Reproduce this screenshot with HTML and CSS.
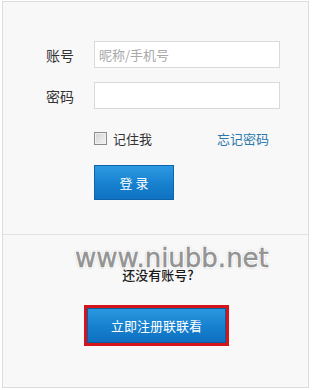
FILE: index.html
```html
<!DOCTYPE html>
<html lang="zh-CN">
<head>
<meta charset="utf-8">
<title>登录</title>
<link rel="stylesheet" href="styles.css">
</head>
<body>
<div class="panel">
  <div class="login">
    <div class="form">
      <div class="row">
        <label class="label" for="acc">账号</label>
        <input class="field" id="acc" type="text" placeholder="昵称/手机号">
      </div>
      <div class="row">
        <label class="label" for="pwd">密码</label>
        <input class="field" id="pwd" type="password">
      </div>
      <div class="opts">
        <span class="remember"><span class="box"></span>记住我</span>
        <a class="forgot" href="#">忘记密码</a>
      </div>
      <div class="submit-row">
        <button class="btn-login" type="button">登 录</button>
      </div>
    </div>
  </div>
  <div class="signup">
    <div class="watermark">www.niubb.net</div>
    <p class="ask">还没有账号?</p>
    <div class="reg-frame">
      <button class="btn-reg" type="button">立即注册联联看</button>
    </div>
  </div>
</div>
</body>
</html>
```
FILE: styles.css
```css
html, body {
  margin: 0;
  padding: 0;
  background: #ffffff;
}
body {
  font-family: "Noto Sans CJK SC", "Liberation Sans", sans-serif;
  color: #333;
}
.panel {
  margin: 1px 0 0 2px;
  width: 307px;
  height: 387px;
  box-sizing: border-box;
  border: 1px solid #dcdcdc;
  background: #f8f8f8;
  display: flex;
  flex-direction: column;
}
.login {
  padding: 39px 0 34px 43px;
}
.form {
  width: 234px;
  display: flex;
  flex-direction: column;
}
.row {
  display: flex;
  align-items: center;
  height: 27px;
}
.row + .row {
  margin-top: 14px;
}
.label {
  width: 48px;
  font-size: 14px;
  color: #333;
}
.field {
  width: 186px;
  height: 27px;
  box-sizing: border-box;
  border: 1px solid #d9d9d9;
  background: #fff;
  padding: 0 0 0 4px;
  font-family: "Noto Sans CJK SC", sans-serif;
  font-size: 13px;
  color: #333;
  outline: none;
}
.field::placeholder {
  color: #a9a9a9;
}
.opts {
  margin-top: 19px;
  height: 20px;
  display: flex;
  align-items: center;
  padding-left: 48px;
  padding-right: 11px;
  font-size: 13px;
}
.remember {
  display: flex;
  align-items: center;
  color: #333;
}
.box {
  width: 11px;
  height: 11px;
  border: 1px solid #8c8c8c;
  background: linear-gradient(135deg, #d2d2d2, #f4f4f4);
  margin-right: 6px;
  box-shadow: inset 0 0 0 1px #f0f0f0;
}
.forgot {
  margin-left: auto;
  color: #2a78ad;
  text-decoration: none;
}
.submit-row {
  margin-top: 17px;
  padding-left: 48px;
}
.btn-login {
  width: 80px;
  height: 35px;
  border: 1px solid #0e64a8;
  background: linear-gradient(#2c9ae2, #1780cf 55%, #0f72c2);
  color: #fff;
  font-family: "Noto Sans CJK SC", sans-serif;
  font-size: 13px;
  padding: 0;
  cursor: pointer;
}
.signup {
  position: relative;
  border-top: 1px solid #e2e2e2;
  flex: 1;
  display: flex;
  flex-direction: column;
  align-items: center;
  padding-top: 31px;
}
.watermark {
  position: absolute;
  left: 72px;
  top: 10px;
  font-family: "DejaVu Sans", sans-serif;
  font-size: 26px;
  line-height: 26px;
  color: #959595;
  -webkit-text-stroke: 0.4px #8a8a8a;
  text-shadow:
    1px 0 0 #fff, -1px 0 0 #fff, 0 1px 0 #fff, 0 -1px 0 #fff,
    1px 1px 0 #fff, -1px -1px 0 #fff, 1px -1px 0 #fff, -1px 1px 0 #fff,
    0 0 3px rgba(0, 0, 0, 0.45);
  white-space: nowrap;
}
.ask {
  position: relative;
  margin: 0;
  font-size: 13px;
  line-height: 18px;
  color: #1a1a1a;
  font-weight: 500;
  padding-left: 5px;
}
.reg-frame {
  margin-top: 21px;
  border: 3px solid #d5141c;
  width: 145px;
  height: 41px;
  box-sizing: border-box;
  margin-left: 2px;
}
.btn-reg {
  width: 100%;
  height: 100%;
  border: 1px solid #0b5c99;
  background: linear-gradient(#2a98e0, #1680cf 55%, #0e70c0);
  color: #fff;
  font-family: "Noto Sans CJK SC", sans-serif;
  font-size: 13px;
  padding: 0;
  cursor: pointer;
}
```
